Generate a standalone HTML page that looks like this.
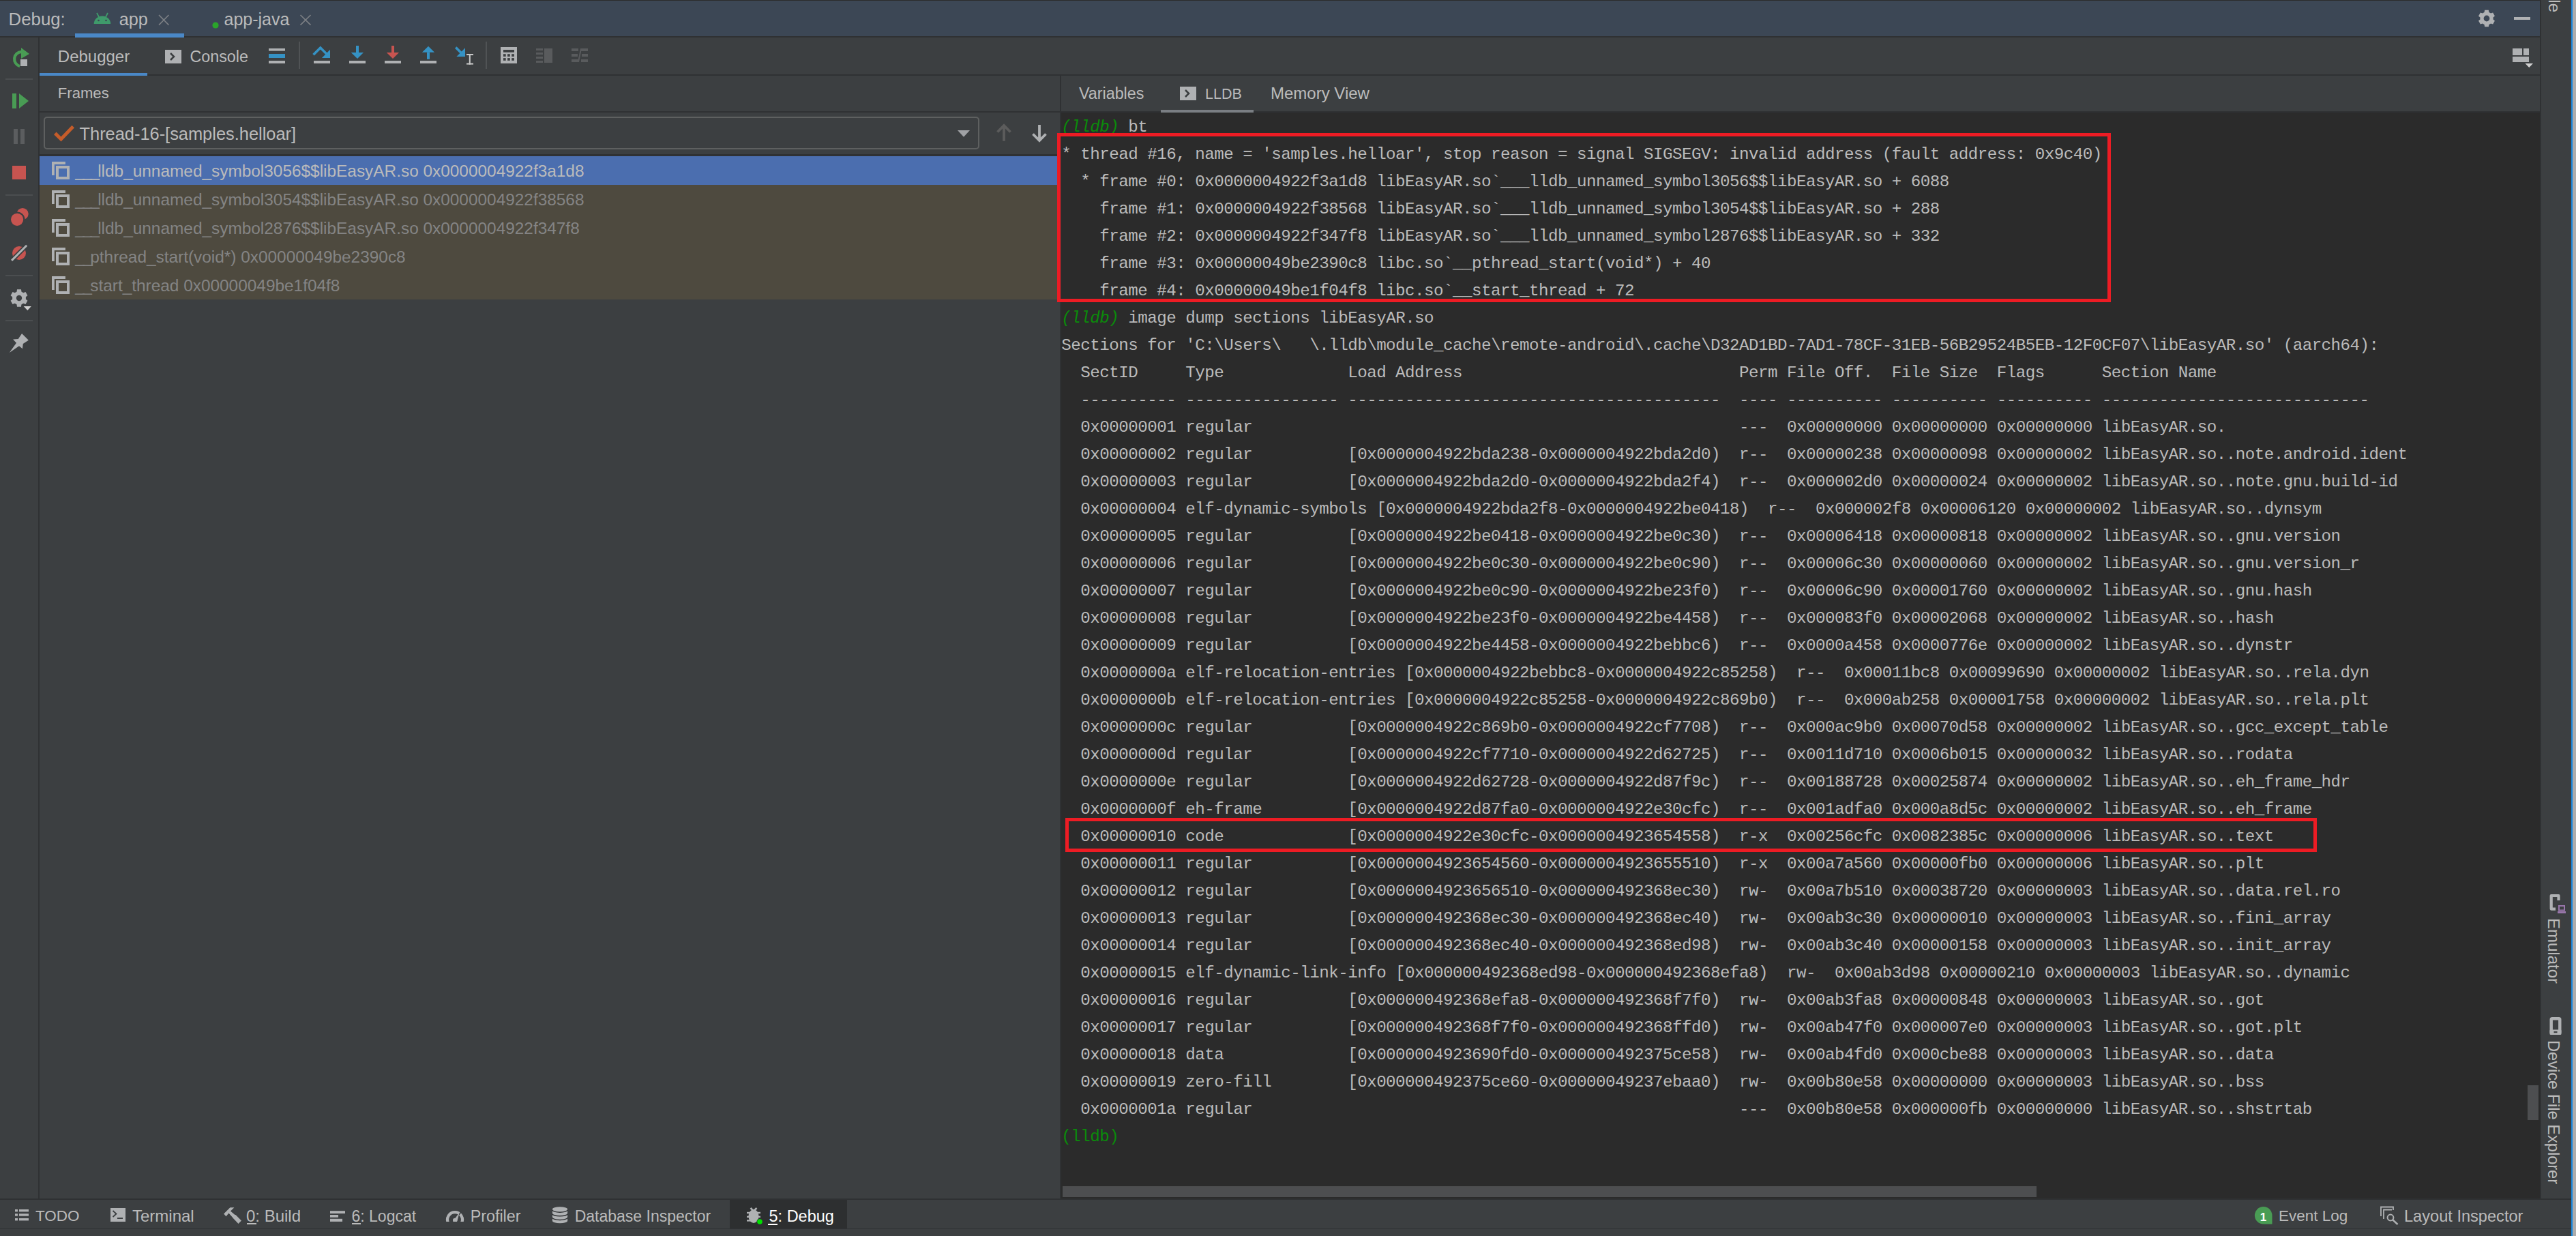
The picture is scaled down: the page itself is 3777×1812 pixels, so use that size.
<!DOCTYPE html>
<html><head><meta charset="utf-8">
<style>
html,body{margin:0;padding:0;width:3777px;height:1812px;overflow:hidden;background:#3c3f41;}
body>div,body>svg{position:absolute;}
.t{font-family:"Liberation Sans",sans-serif;white-space:pre;}
pre{margin:0;font-family:"Liberation Mono",monospace;font-size:24.2px;letter-spacing:-0.52px;line-height:40px;color:#bbbbbb;white-space:pre;}
.u{letter-spacing:-2.6px;}
.pr{color:#0a8c0a;font-style:italic;}
.pq{color:#0a8c0a;}
</style></head><body>
<div style="left:0px;top:0px;width:3777px;height:1812px;background:#3c3f41;"></div>
<div style="left:0px;top:0px;width:3724px;height:1px;background:#2b2b2b;"></div>
<div style="left:0px;top:1px;width:3724px;height:52px;background:#3c4755;"></div>
<div style="left:0px;top:53px;width:3724px;height:2px;background:#2f3133;"></div>
<div style="left:56px;top:55px;width:2px;height:1702px;background:#2f3133;"></div>
<div style="left:58px;top:109px;width:3666px;height:2px;background:#2f3133;"></div>
<div style="left:58px;top:163px;width:3666px;height:2px;background:#2f3133;"></div>
<div style="left:1554px;top:111px;width:2px;height:1646px;background:#2f3133;"></div>
<div style="left:58px;top:226px;width:1496px;height:3px;background:#2f3133;"></div>
<div style="left:1556px;top:165px;width:2168px;height:1592px;background:#2b2b2b;"></div>
<div style="left:0px;top:1757px;width:3770px;height:2px;background:#2f3133;"></div>
<div style="left:0px;top:1801px;width:3770px;height:1px;background:#2f3133;"></div>
<div style="left:3724px;top:0px;width:2px;height:1757px;background:#2f3133;"></div>
<div style="left:3770px;top:0px;width:2px;height:1812px;background:#1686dd;"></div>
<div style="left:3772px;top:0px;width:5px;height:1812px;background:#acacac;"></div>
<div class="t" style="left:12.6px;top:12.96px;font-size:25.8px;line-height:30px;color:#bbbbbb;">Debug:</div>
<svg style="left:136px;top:17px;" width="28" height="20" viewBox="136 17 28 20"><path d="M137.7 34.9 A12.25 11.5 0 0 1 162.2 34.9 Z" fill="#3f9a6b"/>
<line x1="142" y1="19" x2="145" y2="25" stroke="#3f9a6b" stroke-width="1.8"/>
<line x1="158" y1="19" x2="155" y2="25" stroke="#3f9a6b" stroke-width="1.8"/>
<circle cx="144.5" cy="30" r="1.3" fill="#3c4755"/><circle cx="155.5" cy="30" r="1.3" fill="#3c4755"/></svg>
<div class="t" style="left:174.8px;top:13.26px;font-size:25.2px;line-height:30px;color:#bbbbbb;">app</div>
<svg style="left:230px;top:19px;" width="20" height="20" viewBox="230 19 20 20"><path d="M233 22 L247.4 36.6 M247.4 22 L233 36.6" stroke="#7d8085" stroke-width="1.6"/></svg>
<div style="left:110px;top:49px;width:160px;height:6px;background:#4a88c7;"></div>
<svg style="left:310px;top:31px;" width="12" height="12" viewBox="310 31 12 12"><circle cx="316" cy="37" r="4.6" fill="#2aa52a"/></svg>
<div class="t" style="left:328.5px;top:13.33px;font-size:25px;line-height:30px;color:#bbbbbb;">app-java</div>
<svg style="left:437px;top:19px;" width="21" height="20" viewBox="437 19 21 20"><path d="M440.5 22 L455.5 36.6 M455.5 22 L440.5 36.6" stroke="#7d8085" stroke-width="1.6"/></svg>
<svg style="left:3630px;top:11px;" width="32" height="32" viewBox="3630 11 32 32"><polygon points="3642.58,17.92 3643.15,14.83 3648.85,14.83 3649.42,17.92 3652.15,19.50 3655.12,18.45 3657.97,23.38 3655.57,25.42 3655.57,28.58 3657.97,30.62 3655.12,35.55 3652.15,34.50 3649.42,36.08 3648.85,39.17 3643.15,39.17 3642.58,36.08 3639.85,34.50 3636.88,35.55 3634.03,30.62 3636.43,28.58 3636.43,25.42 3634.03,23.38 3636.88,18.45 3639.85,19.50" fill="#afb1b3"/><circle cx="3646" cy="27" r="8.92" fill="#afb1b3"/><circle cx="3646" cy="27" r="4.4" fill="#3c4755"/></svg>
<div style="left:3686px;top:25px;width:24px;height:4px;background:#afb1b3;"></div>
<svg style="left:10px;top:64px;" width="40" height="40" viewBox="10 64 40 40"><path d="M29 97 A10.8 10.8 0 0 1 31.5 75.8" fill="none" stroke="#499c54" stroke-width="4.2"/>
<polygon points="31,70 43,79 31,86" fill="#499c54"/>
<rect x="30" y="87" width="10" height="10" fill="#afb1b3"/></svg>
<div style="left:8px;top:115px;width:40px;height:2px;background:#4b4e50;"></div>
<svg style="left:14px;top:133px;" width="32" height="30" viewBox="14 133 32 30"><rect x="18" y="137" width="6" height="22" fill="#499c54"/><polygon points="28,137 42,148 28,159" fill="#499c54"/></svg>
<svg style="left:16px;top:185px;" width="26" height="30" viewBox="16 185 26 30"><rect x="20" y="189" width="6" height="22" fill="#5b5d5f"/><rect x="30" y="189" width="6" height="22" fill="#5b5d5f"/></svg>
<div style="left:18px;top:243px;width:20px;height:20px;background:#c75450;"></div>
<div style="left:8px;top:285px;width:40px;height:2px;background:#4b4e50;"></div>
<svg style="left:12px;top:300px;" width="36" height="36" viewBox="12 300 36 36"><circle cx="33.1" cy="313.5" r="8.6" fill="#c75450"/><circle cx="25.1" cy="321.8" r="11.4" fill="#3c3f41"/><circle cx="25.1" cy="321.8" r="9.1" fill="#c75450"/></svg>
<svg style="left:12px;top:356px;" width="34" height="32" viewBox="12 356 34 32"><circle cx="28" cy="371" r="10" fill="#c75450"/><line x1="17.1" y1="381.9" x2="39.2" y2="359.8" stroke="#3c3f41" stroke-width="6.5"/><line x1="17.1" y1="381.9" x2="39.2" y2="359.8" stroke="#afb1b3" stroke-width="3"/></svg>
<div style="left:8px;top:403px;width:40px;height:2px;background:#4b4e50;"></div>
<svg style="left:12px;top:420px;" width="38" height="38" viewBox="12 420 38 38"><polygon points="24.48,427.64 25.04,424.34 30.96,424.34 31.52,427.64 34.34,429.27 37.48,428.10 40.44,433.24 37.87,435.37 37.87,438.63 40.44,440.76 37.48,445.90 34.34,444.73 31.52,446.36 30.96,449.66 25.04,449.66 24.48,446.36 21.66,444.73 18.52,445.90 15.56,440.76 18.13,438.63 18.13,435.37 15.56,433.24 18.52,428.10 21.66,429.27" fill="#afb1b3"/><circle cx="28" cy="437" r="9.20" fill="#afb1b3"/><circle cx="28" cy="437" r="4.2" fill="#3c3f41"/><polygon points="34.5,449 46,449 40.25,455.5" fill="#3c3f41" stroke="#3c3f41" stroke-width="3"/><polygon points="34.7,449 45.9,449 40.3,455" fill="#d0d0d0"/></svg>
<div style="left:8px;top:469px;width:40px;height:2px;background:#4b4e50;"></div>
<svg style="left:10px;top:485px;" width="36" height="36" viewBox="10 485 36 36"><polygon points="32.05,488.9 41.85,498.7 33.8,504.1 32.9,511.2 28,507.2 13.8,517 24,502.7 19.1,497.4 26.7,497" fill="#afb1b3"/></svg>
<div class="t" style="left:84.8px;top:67.58px;font-size:24px;line-height:30px;color:#bbbbbb;">Debugger</div>
<div style="left:58px;top:107px;width:158px;height:4px;background:#4a88c7;"></div>
<svg style="left:240px;top:70px;" width="30" height="26" viewBox="240 70 30 26"><rect x="242" y="73" width="24" height="20" fill="#afb1b3"/><path d="M250 78 L255 83 L250 88" fill="none" stroke="#3c3f41" stroke-width="2.6"/></svg>
<div class="t" style="left:278.4px;top:67.82px;font-size:23.3px;line-height:30px;color:#bbbbbb;">Console</div>
<svg style="left:390px;top:68px;" width="32" height="28" viewBox="390 68 32 28"><rect x="394" y="71" width="24" height="3.6" fill="#afb1b3"/><rect x="394" y="79" width="24" height="6" fill="#3592c4"/><rect x="394" y="89" width="24" height="4" fill="#afb1b3"/></svg>
<div style="left:438px;top:61px;width:2px;height:40px;background:#505355;"></div>
<svg style="left:455px;top:64px;" width="32" height="32" viewBox="455 64 32 32"><polyline points="459.5,80.3 469.8,70 479,79.2" fill="none" stroke="#3592c4" stroke-width="3.6"/>
<polygon points="484,72.8 484,85 471.9,85" fill="#3592c4"/><rect x="460" y="89" width="24" height="4" fill="#afb1b3"/></svg>
<svg style="left:508px;top:64px;" width="32" height="32" viewBox="508 64 32 32"><rect x="522" y="67" width="4" height="10" fill="#3592c4"/><polygon points="514.8,76.9 533,76.9 524,86" fill="#3592c4"/><rect x="512" y="89" width="24" height="4" fill="#afb1b3"/></svg>
<svg style="left:560px;top:64px;" width="32" height="32" viewBox="560 64 32 32"><rect x="574" y="67" width="4" height="10" fill="#c75450"/><polygon points="566.8,76.9 585,76.9 576,86" fill="#c75450"/><rect x="564" y="89" width="24" height="4" fill="#afb1b3"/></svg>
<svg style="left:612px;top:64px;" width="32" height="32" viewBox="612 64 32 32"><rect x="626" y="76.5" width="4" height="10.3" fill="#3592c4"/><polygon points="618.9,76.7 637.1,76.7 628,67.8" fill="#3592c4"/><rect x="616" y="89" width="24" height="4" fill="#afb1b3"/></svg>
<svg style="left:664px;top:64px;" width="34" height="34" viewBox="664 64 34 34"><line x1="668.2" y1="69.4" x2="677" y2="78.2" stroke="#3592c4" stroke-width="3.6"/>
<polygon points="682,70.2 682,83 669.4,83" fill="#3592c4"/>
<rect x="687.8" y="79" width="2" height="15.6" fill="#c8c8c8"/><rect x="684" y="79" width="10" height="2" fill="#c8c8c8"/><rect x="684" y="92.6" width="10" height="2" fill="#c8c8c8"/></svg>
<div style="left:712px;top:61px;width:2px;height:40px;background:#505355;"></div>
<svg style="left:730px;top:66px;" width="32" height="30" viewBox="730 66 32 30"><rect x="734" y="69" width="24" height="24" fill="#afb1b3"/><rect x="738" y="73" width="16" height="3.7" fill="#3c3f41"/>
<rect x="738" y="79.2" width="3.7" height="3.7" fill="#3c3f41"/><rect x="744.1" y="79.2" width="3.7" height="3.7" fill="#3c3f41"/><rect x="750.2" y="79.2" width="3.7" height="3.7" fill="#3c3f41"/>
<rect x="738" y="85.1" width="3.7" height="3.7" fill="#3c3f41"/><rect x="744.1" y="85.1" width="3.7" height="3.7" fill="#3c3f41"/><rect x="750.2" y="85.1" width="3.7" height="3.7" fill="#3c3f41"/></svg>
<svg style="left:782px;top:66px;" width="32" height="30" viewBox="782 66 32 30"><rect x="786" y="71" width="10" height="3" fill="#595b5d"/><rect x="786" y="77" width="10" height="3" fill="#595b5d"/><rect x="786" y="83" width="10" height="3" fill="#595b5d"/><rect x="786" y="89" width="10" height="3" fill="#595b5d"/><rect x="798" y="71" width="12" height="21" fill="#595b5d"/></svg>
<svg style="left:834px;top:66px;" width="32" height="30" viewBox="834 66 32 30"><rect x="838" y="71" width="10" height="4" fill="#595b5d"/><rect x="852" y="71" width="10" height="4" fill="#595b5d"/><rect x="838" y="79" width="9" height="4" fill="#595b5d"/><rect x="853" y="79" width="9" height="4" fill="#595b5d"/><rect x="838" y="87" width="10" height="4" fill="#595b5d"/><rect x="852" y="87" width="10" height="4" fill="#595b5d"/><path d="M847 91 L851 71 L853 71 L849 91 Z" fill="#595b5d"/></svg>
<svg style="left:3680px;top:68px;" width="38" height="34" viewBox="3680 68 38 34"><rect x="3684" y="71" width="14" height="10" fill="#afb1b3"/><rect x="3700" y="71" width="8" height="10" fill="#afb1b3"/><rect x="3684" y="83" width="24" height="8" fill="#afb1b3"/><polygon points="3702.5,93 3714,93 3708.25,99" fill="#d0d0d0"/></svg>
<div class="t" style="left:84.8px;top:122.04px;font-size:22.1px;line-height:30px;color:#bbbbbb;">Frames</div>
<div class="t" style="left:1582px;top:121.92px;font-size:23.3px;line-height:30px;color:#bbbbbb;">Variables</div>
<svg style="left:1728px;top:125px;" width="28" height="24" viewBox="1728 125 28 24"><rect x="1730" y="127" width="24" height="20" fill="#afb1b3"/><path d="M1738 132 L1743 137 L1738 142" fill="none" stroke="#3c3f41" stroke-width="2.6"/></svg>
<div class="t" style="left:1767px;top:122.55px;font-size:21.5px;line-height:30px;color:#bbbbbb;">LLDB</div>
<div class="t" style="left:1863px;top:121.68px;font-size:24px;line-height:30px;color:#bbbbbb;">Memory View</div>
<div style="left:1702px;top:161px;width:136px;height:4px;background:#7a7e83;"></div>
<div style="left:64px;top:171px;width:1368px;height:44px;border:2px solid #5e6060;border-radius:5px;background:#3c3f41;"></div>
<svg style="left:76px;top:178px;" width="36" height="32" viewBox="76 178 36 32"><polyline points="80.8,195.4 89.5,204 107.2,185.6" fill="none" stroke="#c45c2a" stroke-width="5"/></svg>
<div class="t" style="left:116.5px;top:180.80px;font-size:25.4px;line-height:30px;color:#bbbbbb;">Thread-16-[samples.helloar]</div>
<svg style="left:1400px;top:186px;" width="26" height="18" viewBox="1400 186 26 18"><polygon points="1404,191 1422,191 1413,200.7" fill="#a0a2a5"/></svg>
<svg style="left:1460px;top:180px;" width="26" height="30" viewBox="1460 180 26 30"><path d="M1472 206.8 V185 M1462.5 193.5 L1472 184 L1481.5 193.5" fill="none" stroke="#5c5c5c" stroke-width="3.8"/></svg>
<svg style="left:1512px;top:180px;" width="26" height="30" viewBox="1512 180 26 30"><path d="M1524 183 V205 M1514.5 196.5 L1524 206 L1533.5 196.5" fill="none" stroke="#afb1b3" stroke-width="3.8"/></svg>
<div style="left:58px;top:229px;width:1496px;height:42px;background:#4b6eaf;"></div>
<svg style="left:74px;top:235px;" width="32" height="30" viewBox="74 235 32 30"><path d="M77.9 257 V239 H95.9" fill="none" stroke="#afb1b3" stroke-width="3.8"/><rect x="84" y="245" width="16" height="16" fill="none" stroke="#afb1b3" stroke-width="4"/></svg>
<div class="t" style="left:110.3px;top:236.14px;font-size:24.4px;line-height:30px;color:#bbbbbb;"><span class=u>___</span>lldb_unnamed_symbol3056$$libEasyAR.so 0x0000004922f3a1d8</div>
<div style="left:58px;top:271px;width:1496px;height:42px;background:#4e4a3f;"></div>
<svg style="left:74px;top:277px;" width="32" height="30" viewBox="74 277 32 30"><path d="M77.9 299 V281 H95.9" fill="none" stroke="#afb1b3" stroke-width="3.8"/><rect x="84" y="287" width="16" height="16" fill="none" stroke="#afb1b3" stroke-width="4"/></svg>
<div class="t" style="left:110.3px;top:278.14px;font-size:24.4px;line-height:30px;color:#848484;"><span class=u>___</span>lldb_unnamed_symbol3054$$libEasyAR.so 0x0000004922f38568</div>
<div style="left:58px;top:313px;width:1496px;height:42px;background:#4e4a3f;"></div>
<svg style="left:74px;top:319px;" width="32" height="30" viewBox="74 319 32 30"><path d="M77.9 341 V323 H95.9" fill="none" stroke="#afb1b3" stroke-width="3.8"/><rect x="84" y="329" width="16" height="16" fill="none" stroke="#afb1b3" stroke-width="4"/></svg>
<div class="t" style="left:110.3px;top:320.14px;font-size:24.4px;line-height:30px;color:#848484;"><span class=u>___</span>lldb_unnamed_symbol2876$$libEasyAR.so 0x0000004922f347f8</div>
<div style="left:58px;top:355px;width:1496px;height:42px;background:#4e4a3f;"></div>
<svg style="left:74px;top:361px;" width="32" height="30" viewBox="74 361 32 30"><path d="M77.9 383 V365 H95.9" fill="none" stroke="#afb1b3" stroke-width="3.8"/><rect x="84" y="371" width="16" height="16" fill="none" stroke="#afb1b3" stroke-width="4"/></svg>
<div class="t" style="left:110.3px;top:362.14px;font-size:24.4px;line-height:30px;color:#848484;"><span class=u>__</span>pthread_start(void*) 0x00000049be2390c8</div>
<div style="left:58px;top:397px;width:1496px;height:42px;background:#4e4a3f;"></div>
<svg style="left:74px;top:403px;" width="32" height="30" viewBox="74 403 32 30"><path d="M77.9 425 V407 H95.9" fill="none" stroke="#afb1b3" stroke-width="3.8"/><rect x="84" y="413" width="16" height="16" fill="none" stroke="#afb1b3" stroke-width="4"/></svg>
<div class="t" style="left:110.3px;top:404.14px;font-size:24.4px;line-height:30px;color:#848484;"><span class=u>__</span>start_thread 0x00000049be1f04f8</div>
<div style="left:1550px;top:195px;width:1535px;height:238px;border:5px solid #ed1c24;z-index:5"></div>
<div style="left:1562px;top:1199px;width:1825px;height:40px;border:5px solid #ed1c24;z-index:5"></div>
<div style="left:1558px;top:1739px;width:1428px;height:16px;background:#4d4e50;"></div>
<div style="left:3706px;top:1591px;width:16px;height:51px;background:#4d4e50;"></div>
<div class="t" style="left:3733px;top:-15.35px;font-size:1px;line-height:30px;color:#bbbbbb;"></div>
<div class="t" style="left:3725px;top:-59px;width:40px;height:77px;font-size:24px;line-height:40px;color:#bbbbbb;writing-mode:vertical-rl;text-align:right;">Gradle</div>
<svg style="left:3734px;top:1306px;" width="32" height="36" viewBox="3734 1306 32 36"><path d="M3751.5 1320 V1313 H3740.7 V1332.6 H3747" fill="none" stroke="#afb1b3" stroke-width="4.2" stroke-linejoin="round"/><rect x="3752" y="1328" width="8" height="6.5" fill="none" stroke="#9876aa" stroke-width="2"/><rect x="3750" y="1336" width="12" height="3" fill="#9876aa"/></svg>
<div class="t" style="left:3724px;top:1346px;width:40px;font-size:24px;line-height:40px;color:#bbbbbb;writing-mode:vertical-rl;">Emulator</div>
<svg style="left:3734px;top:1488px;" width="28" height="32" viewBox="3734 1488 28 32"><rect x="3740.7" y="1493.2" width="12.6" height="21.6" rx="1.5" fill="none" stroke="#afb1b3" stroke-width="4.4"/><rect x="3738.5" y="1509.5" width="17" height="7.5" rx="1.5" fill="#afb1b3"/><rect x="3744.5" y="1512" width="5" height="2.2" fill="#3c3f41"/></svg>
<div class="t" style="left:3724px;top:1525px;width:40px;font-size:23.6px;line-height:40px;color:#bbbbbb;writing-mode:vertical-rl;">Device File Explorer</div>
<div style="left:1070px;top:1759px;width:172px;height:42px;background:#2d2f30;"></div>
<svg style="left:18px;top:1768px;" width="30" height="26" viewBox="18 1768 30 26"><rect x="22" y="1773" width="4" height="3.4" fill="#afb1b3"/><rect x="28" y="1773" width="14" height="3.4" fill="#afb1b3"/><rect x="22" y="1779.3" width="4" height="3.4" fill="#afb1b3"/><rect x="28" y="1779.3" width="14" height="3.4" fill="#afb1b3"/><rect x="22" y="1786" width="4" height="3.4" fill="#afb1b3"/><rect x="28" y="1786" width="14" height="3.4" fill="#afb1b3"/></svg>
<div class="t" style="left:52px;top:1768.10px;font-size:22.5px;line-height:30px;color:#bbbbbb;">TODO</div>
<svg style="left:160px;top:1769px;" width="28" height="24" viewBox="160 1769 28 24"><rect x="162" y="1771" width="22" height="20" fill="#afb1b3"/><path d="M165.5 1775 L170.5 1779.5 L165.5 1784" fill="none" stroke="#3c3f41" stroke-width="1.8"/><rect x="172" y="1785" width="8" height="2" fill="#3c3f41"/></svg>
<div class="t" style="left:194px;top:1767.58px;font-size:24px;line-height:30px;color:#bbbbbb;">Terminal</div>
<svg style="left:325px;top:1767px;" width="32" height="30" viewBox="325 1767 32 30"><polygon points="328.1,1779.6 337.4,1770.2 343.4,1770.2 338,1775.4 344.2,1780.75 345.8,1781.3 353.9,1789.6 349.5,1794 341.2,1785.3 340.8,1784.4 335.4,1778.6 331.5,1783.2" fill="#afb1b3"/></svg>
<div class="t" style="left:361px;top:1767.58px;font-size:24px;line-height:30px;color:#bbbbbb;">0: Build</div>
<div style="left:362px;top:1793px;width:14px;height:2px;background:#bbbbbb;"></div>
<svg style="left:480px;top:1772px;" width="30" height="22" viewBox="480 1772 30 22"><rect x="484" y="1775.2" width="22" height="3.8" fill="#afb1b3"/><rect x="484" y="1781" width="12" height="3.7" fill="#afb1b3"/><rect x="484" y="1786.8" width="18" height="4.1" fill="#afb1b3"/></svg>
<div class="t" style="left:515.5px;top:1767.93px;font-size:23px;line-height:30px;color:#bbbbbb;">6: Logcat</div>
<div style="left:516px;top:1793px;width:13px;height:2px;background:#bbbbbb;"></div>
<svg style="left:650px;top:1770px;" width="34" height="24" viewBox="650 1770 34 24"><path d="M657.26 1793 A10.95 10.95 0 1 1 676.74 1793" fill="none" stroke="#afb1b3" stroke-width="4.2"/><line x1="671" y1="1783" x2="677.5" y2="1775" stroke="#3c3f41" stroke-width="1.8"/><path d="M664.3 1790.3 L673.8 1777.3 L670.3 1790.3 Z" fill="#afb1b3"/><circle cx="667.2" cy="1789" r="3.2" fill="#afb1b3"/><rect x="650" y="1791" width="34" height="4" fill="#3c3f41"/></svg>
<div class="t" style="left:689.7px;top:1767.82px;font-size:23.3px;line-height:30px;color:#bbbbbb;">Profiler</div>
<svg style="left:806px;top:1766px;" width="30" height="30" viewBox="806 1766 30 30"><rect x="809.9" y="1772.7" width="22.2" height="17.3" fill="#afb1b3"/><ellipse cx="821" cy="1772.7" rx="11.1" ry="3.37" fill="#afb1b3"/><ellipse cx="821" cy="1790" rx="11.1" ry="3.3" fill="#afb1b3"/><path d="M809.6 1773.6 A11.4 3.6 0 0 0 832.4 1773.6 M809.6 1779.2 A11.4 3.6 0 0 0 832.4 1779.2 M809.6 1784.8 A11.4 3.6 0 0 0 832.4 1784.8" fill="none" stroke="#323436" stroke-width="1.5"/></svg>
<div class="t" style="left:842.7px;top:1767.93px;font-size:23px;line-height:30px;color:#bbbbbb;">Database Inspector</div>
<svg style="left:1090px;top:1766px;" width="34" height="32" viewBox="1090 1766 34 32"><ellipse cx="1105" cy="1783" rx="7.5" ry="10" fill="#afb1b3"/><path d="M1100.5 1771 L1105 1775.5 L1109.5 1771" fill="none" stroke="#afb1b3" stroke-width="2.6"/>
<rect x="1095" y="1776.8" width="20" height="2.4" fill="#afb1b3"/><rect x="1095" y="1782.6" width="20" height="2.4" fill="#afb1b3"/><rect x="1095" y="1788.2" width="20" height="2.4" fill="#afb1b3"/><circle cx="1114" cy="1791" r="4.5" fill="#2d2f30"/><circle cx="1114" cy="1791" r="3.8" fill="#00e000"/></svg>
<div class="t" style="left:1127.5px;top:1767.75px;font-size:23.5px;line-height:30px;color:#ffffff;">5: Debug</div>
<div style="left:1126px;top:1793.5px;width:14px;height:2px;background:#ffffff;"></div>
<svg style="left:3302px;top:1766px;" width="34" height="32" viewBox="3302 1766 34 32"><path d="M3305.9 1781.8 A12.8 12.8 0 0 1 3331.5 1781.8 V1794.6 H3318.7 A12.8 12.8 0 0 1 3305.9 1781.8 Z" fill="#499c54"/><text x="3318.5" y="1789.5" font-family="Liberation Sans" font-weight="bold" font-size="17" fill="#ffffff" text-anchor="middle">1</text></svg>
<div class="t" style="left:3341px;top:1768.10px;font-size:22.5px;line-height:30px;color:#bbbbbb;">Event Log</div>
<svg style="left:3486px;top:1766px;" width="34" height="32" viewBox="3486 1766 34 32"><path d="M3491 1783 V1769.5 H3509 V1774" fill="none" stroke="#afb1b3" stroke-width="1.8"/><path d="M3495 1787 V1773.5 H3507" fill="none" stroke="#afb1b3" stroke-width="1.8"/><circle cx="3505" cy="1785" r="4.4" fill="none" stroke="#afb1b3" stroke-width="2"/><line x1="3508" y1="1788" x2="3515.5" y2="1795" stroke="#afb1b3" stroke-width="2.4"/></svg>
<div class="t" style="left:3525px;top:1767.72px;font-size:23.6px;line-height:30px;color:#bbbbbb;">Layout Inspector</div>
<div style="left:1556.3px;top:166.8px;width:2166px;height:1570px;overflow:hidden;"><pre><span class="pr">(lldb)</span> bt
* thread #16, name = &#x27;samples.helloar&#x27;, stop reason = signal SIGSEGV: invalid address (fault address: 0x9c40)
  * frame #0: 0x0000004922f3a1d8 libEasyAR.so`___lldb_unnamed_symbol3056$$libEasyAR.so + 6088
    frame #1: 0x0000004922f38568 libEasyAR.so`___lldb_unnamed_symbol3054$$libEasyAR.so + 288
    frame #2: 0x0000004922f347f8 libEasyAR.so`___lldb_unnamed_symbol2876$$libEasyAR.so + 332
    frame #3: 0x00000049be2390c8 libc.so`__pthread_start(void*) + 40
    frame #4: 0x00000049be1f04f8 libc.so`__start_thread + 72
<span class="pr">(lldb)</span> image dump sections libEasyAR.so
Sections for &#x27;C:\Users\   \.lldb\module_cache\remote-android\.cache\D32AD1BD-7AD1-78CF-31EB-56B29524B5EB-12F0CF07\libEasyAR.so&#x27; (aarch64):
  SectID     Type             Load Address                             Perm File Off.  File Size  Flags      Section Name
  ---------- ---------------- ---------------------------------------  ---- ---------- ---------- ---------- ----------------------------
  0x00000001 regular                                                   ---  0x00000000 0x00000000 0x00000000 libEasyAR.so.
  0x00000002 regular          [0x0000004922bda238-0x0000004922bda2d0)  r--  0x00000238 0x00000098 0x00000002 libEasyAR.so..note.android.ident
  0x00000003 regular          [0x0000004922bda2d0-0x0000004922bda2f4)  r--  0x000002d0 0x00000024 0x00000002 libEasyAR.so..note.gnu.build-id
  0x00000004 elf-dynamic-symbols [0x0000004922bda2f8-0x0000004922be0418)  r--  0x000002f8 0x00006120 0x00000002 libEasyAR.so..dynsym
  0x00000005 regular          [0x0000004922be0418-0x0000004922be0c30)  r--  0x00006418 0x00000818 0x00000002 libEasyAR.so..gnu.version
  0x00000006 regular          [0x0000004922be0c30-0x0000004922be0c90)  r--  0x00006c30 0x00000060 0x00000002 libEasyAR.so..gnu.version_r
  0x00000007 regular          [0x0000004922be0c90-0x0000004922be23f0)  r--  0x00006c90 0x00001760 0x00000002 libEasyAR.so..gnu.hash
  0x00000008 regular          [0x0000004922be23f0-0x0000004922be4458)  r--  0x000083f0 0x00002068 0x00000002 libEasyAR.so..hash
  0x00000009 regular          [0x0000004922be4458-0x0000004922bebbc6)  r--  0x0000a458 0x0000776e 0x00000002 libEasyAR.so..dynstr
  0x0000000a elf-relocation-entries [0x0000004922bebbc8-0x0000004922c85258)  r--  0x00011bc8 0x00099690 0x00000002 libEasyAR.so..rela.dyn
  0x0000000b elf-relocation-entries [0x0000004922c85258-0x0000004922c869b0)  r--  0x000ab258 0x00001758 0x00000002 libEasyAR.so..rela.plt
  0x0000000c regular          [0x0000004922c869b0-0x0000004922cf7708)  r--  0x000ac9b0 0x00070d58 0x00000002 libEasyAR.so..gcc_except_table
  0x0000000d regular          [0x0000004922cf7710-0x0000004922d62725)  r--  0x0011d710 0x0006b015 0x00000032 libEasyAR.so..rodata
  0x0000000e regular          [0x0000004922d62728-0x0000004922d87f9c)  r--  0x00188728 0x00025874 0x00000002 libEasyAR.so..eh_frame_hdr
  0x0000000f eh-frame         [0x0000004922d87fa0-0x0000004922e30cfc)  r--  0x001adfa0 0x000a8d5c 0x00000002 libEasyAR.so..eh_frame
  0x00000010 code             [0x0000004922e30cfc-0x0000004923654558)  r-x  0x00256cfc 0x0082385c 0x00000006 libEasyAR.so..text
  0x00000011 regular          [0x0000004923654560-0x0000004923655510)  r-x  0x00a7a560 0x00000fb0 0x00000006 libEasyAR.so..plt
  0x00000012 regular          [0x0000004923656510-0x000000492368ec30)  rw-  0x00a7b510 0x00038720 0x00000003 libEasyAR.so..data.rel.ro
  0x00000013 regular          [0x000000492368ec30-0x000000492368ec40)  rw-  0x00ab3c30 0x00000010 0x00000003 libEasyAR.so..fini_array
  0x00000014 regular          [0x000000492368ec40-0x000000492368ed98)  rw-  0x00ab3c40 0x00000158 0x00000003 libEasyAR.so..init_array
  0x00000015 elf-dynamic-link-info [0x000000492368ed98-0x000000492368efa8)  rw-  0x00ab3d98 0x00000210 0x00000003 libEasyAR.so..dynamic
  0x00000016 regular          [0x000000492368efa8-0x000000492368f7f0)  rw-  0x00ab3fa8 0x00000848 0x00000003 libEasyAR.so..got
  0x00000017 regular          [0x000000492368f7f0-0x000000492368ffd0)  rw-  0x00ab47f0 0x000007e0 0x00000003 libEasyAR.so..got.plt
  0x00000018 data             [0x0000004923690fd0-0x000000492375ce58)  rw-  0x00ab4fd0 0x000cbe88 0x00000003 libEasyAR.so..data
  0x00000019 zero-fill        [0x000000492375ce60-0x00000049237ebaa0)  rw-  0x00b80e58 0x00000000 0x00000003 libEasyAR.so..bss
  0x0000001a regular                                                   ---  0x00b80e58 0x000000fb 0x00000000 libEasyAR.so..shstrtab
<span class="pq">(lldb)</span></pre></div>
</body></html>
